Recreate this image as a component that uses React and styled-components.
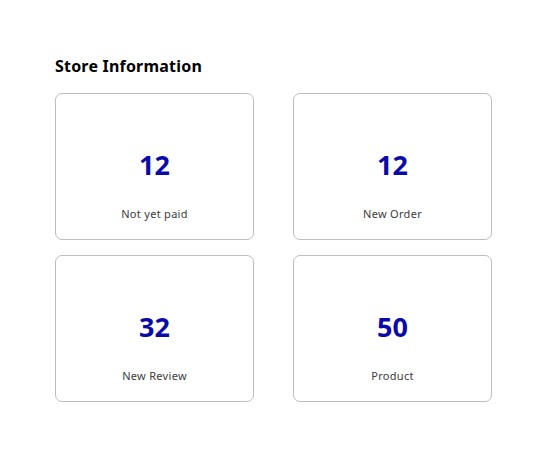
import React from "react";
import styled, { createGlobalStyle } from "styled-components";

const Global = createGlobalStyle`
  html, body { margin: 0; padding: 0; background: #fff; }
  body { font-family: "Noto Sans", "Lato", sans-serif; }
`;

const Page = styled.div`
  padding: 55px 0 0 55px;
`;

const Title = styled.h2`
  margin: 0 0 16px 0;
  font-size: 16px;
  line-height: 22px;
  font-weight: 700;
  color: #000;
  letter-spacing: 0.2px;
`;

const Grid = styled.div`
  display: grid;
  grid-template-columns: repeat(2, 199px);
  column-gap: 39px;
  row-gap: 15px;
`;

const Card = styled.div`
  box-sizing: border-box;
  height: 147px;
  border: 1px solid #bdbdbd;
  border-radius: 7px;
  display: flex;
  flex-direction: column;
  align-items: center;
  padding-top: 55px;
`;

const Value = styled.div`
  font-size: 27px;
  line-height: 32px;
  font-weight: 700;
  color: #0a0aab;
`;

const Label = styled.div`
  margin-top: 26px;
  font-size: 11px;
  line-height: 14px;
  letter-spacing: 0.3px;
  color: #3c3c3c;
`;

const items = [
  { value: 12, label: "Not yet paid" },
  { value: 12, label: "New Order" },
  { value: 32, label: "New Review" },
  { value: 50, label: "Product" },
];

export default function App() {
  return (
    <>
      <Global />
      <Page>
        <Title>Store Information</Title>
        <Grid>
          {items.map((it, i) => (
            <Card key={i}>
              <Value>{it.value}</Value>
              <Label>{it.label}</Label>
            </Card>
          ))}
        </Grid>
      </Page>
    </>
  );
}
